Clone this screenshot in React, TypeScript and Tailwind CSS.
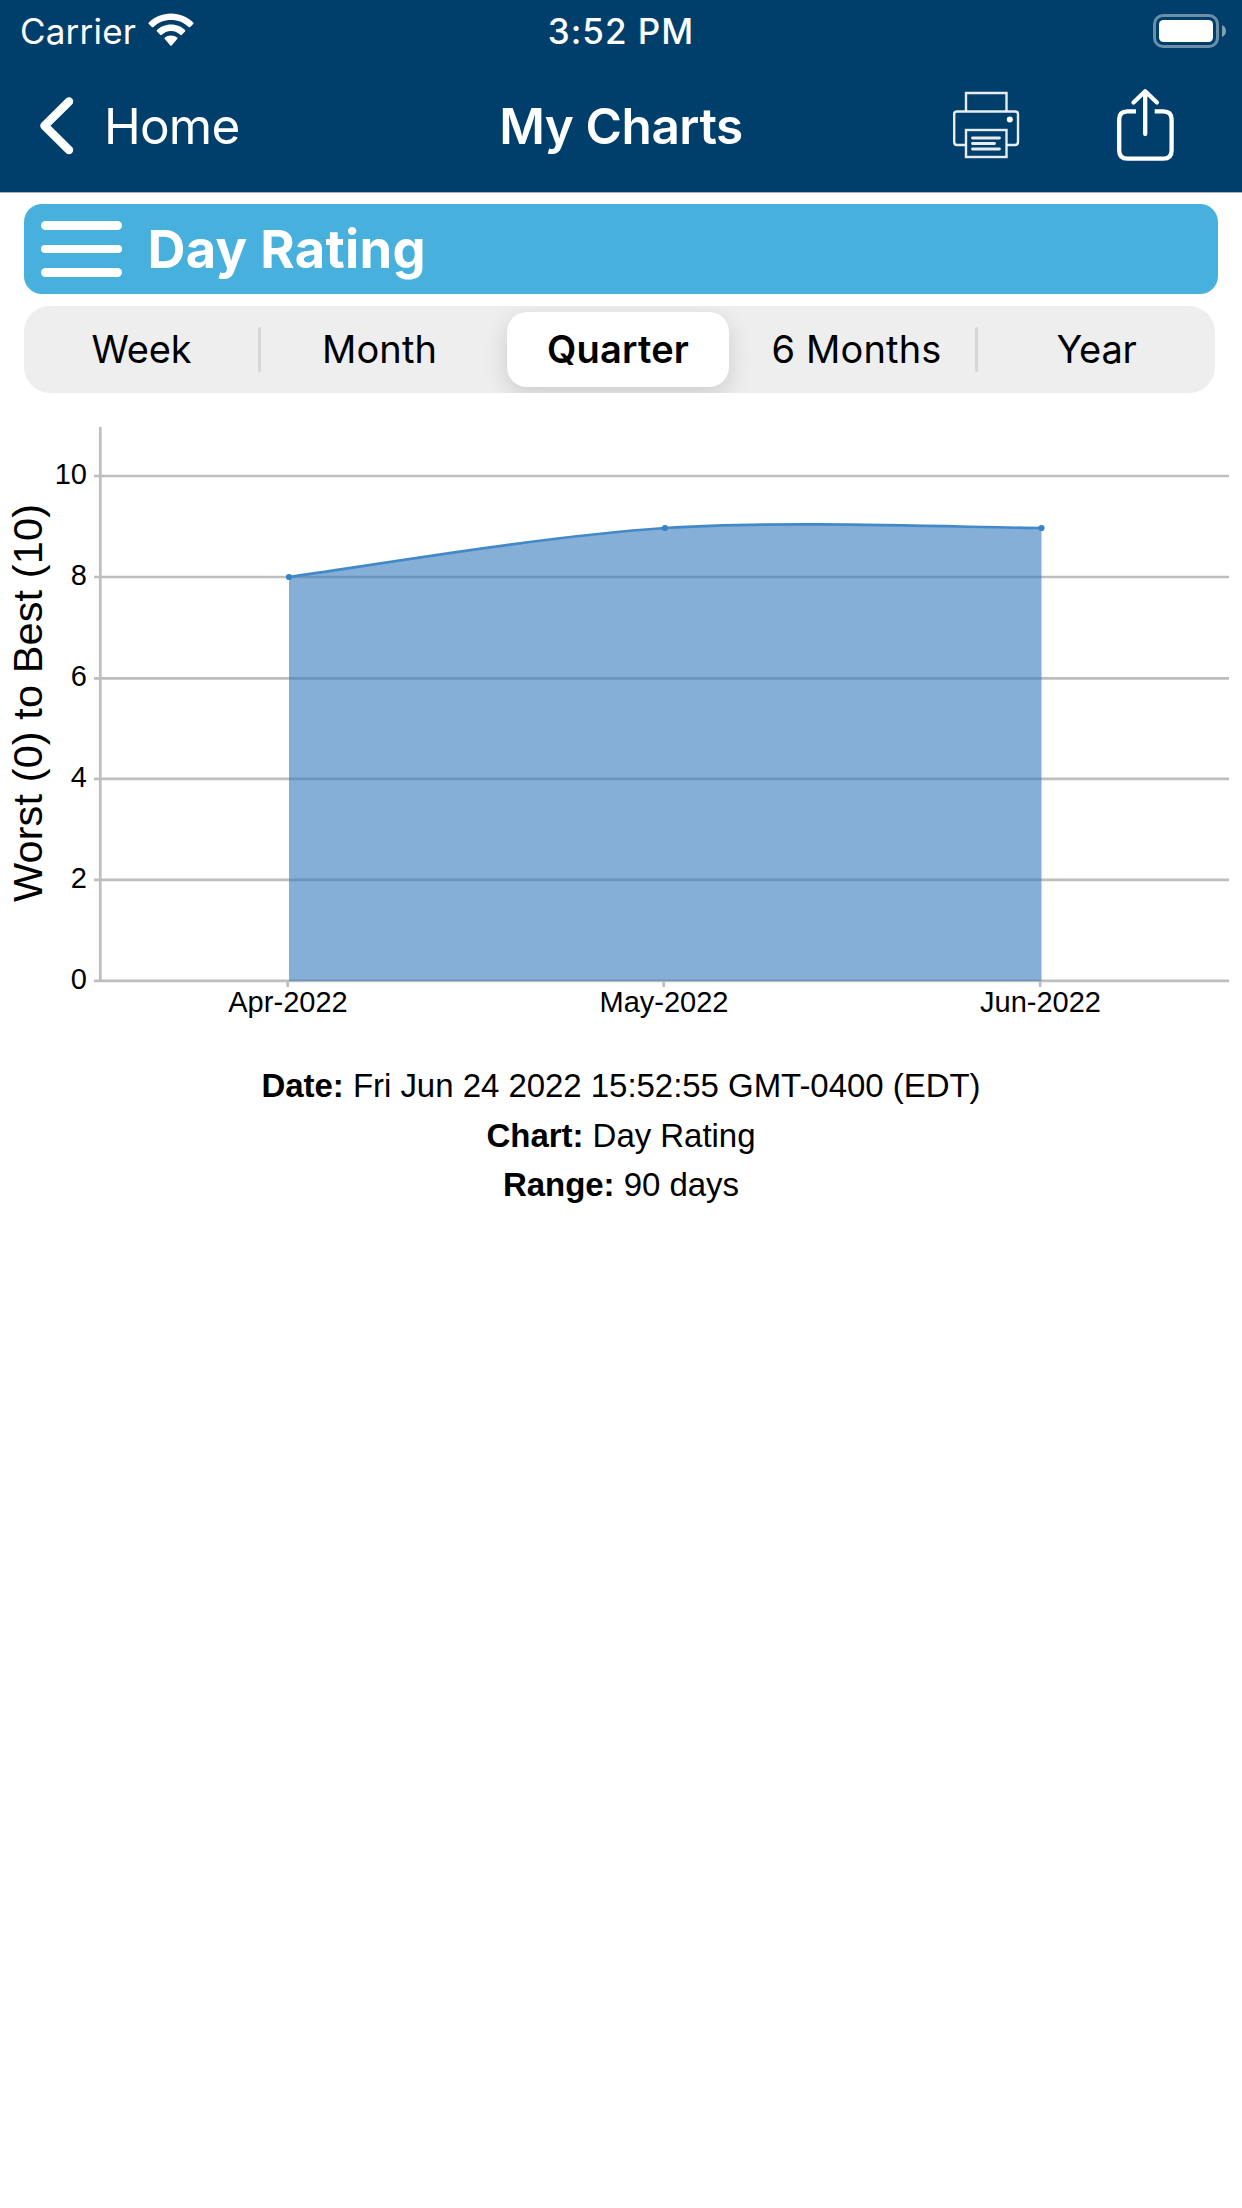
import { useState } from "react";

const RANGES = ["Week", "Month", "Quarter", "6 Months", "Year"];

const TRACKING: Record<string, string> = {
  Week: "tracking-[-0.2px]",
  Month: "tracking-[0.1px]",
  Quarter: "font-semibold tracking-[0.2px]",
  "6 Months": "tracking-[0.15px]",
  Year: "tracking-[-0.2px]",
};

const TICKS = [
  { value: 10, y: 476 },
  { value: 8, y: 577 },
  { value: 6, y: 678.3 },
  { value: 4, y: 778.8 },
  { value: 2, y: 879.8 },
  { value: 0, y: 980.8 },
];

const POINTS = [
  { label: "Apr-2022", x: 289, y: 577, width: 119.5 },
  { label: "May-2022", x: 665, y: 528, width: 129 },
  { label: "Jun-2022", x: 1041.5, y: 528, width: 121 },
];

const CURVE =
  "M289 577C351.7 568.8 539.7 536.2 665 528C790.3 519.8 978.8 528 1041.5 528";

function StatusBar() {
  return (
    <div className="grid h-[63px] grid-cols-[1fr_auto_1fr] items-center text-[35px] leading-none">
      <div className="flex items-center gap-[11px] pl-5">
        <span className="tracking-[0.2px]">Carrier</span>
        <svg className="-mt-1 h-[34px] w-[48px]" viewBox="0 0 48 34" fill="currentColor">
          <path d="M24 0.5C33 0.5 40.5 4 46.2 9.4Q47 10.2 46.2 11L43.2 14Q42.4 14.7 41.6 14C36.8 9.6 31 7 24 7S11.2 9.6 6.4 14Q5.6 14.7 4.8 14L1.8 11Q1 10.2 1.8 9.4C7.5 4 15 0.5 24 0.5Z" />
          <path d="M24 11.5C30 11.5 34.5 13.8 38 17Q38.8 17.8 38 18.6L34.8 21.8Q34 22.5 33.2 21.8C30.6 19.5 27.8 18.1 24 18.1S17.4 19.5 14.8 21.8Q14 22.5 13.2 21.8L10 18.6Q9.2 17.8 10 17C13.5 13.8 18 11.5 24 11.5Z" />
          <path d="M24 22.5C26.6 22.5 28.6 23.3 30.2 24.5Q31 25.2 30.2 26L24.7 32.5Q24 33.2 23.3 32.5L17.8 26Q17 25.2 17.8 24.5C19.4 23.3 21.4 22.5 24 22.5Z" />
        </svg>
      </div>
      <span className="font-medium tracking-[1px]">3:52 PM</span>
      <svg className="-mt-0.5 mr-4 h-[34px] w-[73px] justify-self-end" viewBox="0 0 73 34" fill="none">
        <rect x="1.5" y="1.5" width="63" height="31" rx="8.5" stroke="white" strokeOpacity="0.42" strokeWidth="3" />
        <rect x="6" y="6" width="54" height="22" rx="4.5" fill="white" />
        <path d="M69 11Q73 13 73 17T69 23Z" fill="white" fillOpacity="0.5" />
      </svg>
    </div>
  );
}

function PrinterIcon() {
  return (
    <svg className="h-[68px] w-[68px]" viewBox="952 91 68 68" fill="none" stroke="currentColor" strokeWidth="2.4" strokeOpacity="0.9">
      <path d="M966 111V93H1006.5V111" />
      <path d="M966 145H957Q954.2 145 954.2 142V114Q954.2 111.5 957 111.5H1015Q1018 111.5 1018 114V142Q1018 145 1015 145H1006.5" />
      <rect x="966" y="130" width="40.5" height="27" />
      <path d="M972.5 138H999.5M972.5 143.5H994.5M972.5 149H999.500" strokeWidth="2.800" strokeLinecap="round" />
      <circle cx="1009.8" cy="119.5" r="3" fill="currentColor" stroke="none" />
    </svg>
  );
}

function ShareIcon() {
  return (
    <svg className="h-[74px] w-[60px]" viewBox="1115 87 60 74" fill="none" stroke="currentColor" strokeWidth="4.3">
      <path d="M1136 110.3H1127.5Q1119.2 110.3 1119.2 118.5V149.5Q1119.2 157.7 1127.5 157.7H1163.3Q1171.6 157.7 1171.6 149.5V118.5Q1171.6 110.3 1163.3 110.3H1154.7" />
      <path d="M1145.2 91V133M1133.5 101.5L1145.2 90.3L1156.9 101.5" strokeLinecap="round" strokeLinejoin="round" />
    </svg>
  );
}

function NavBar() {
  return (
    <div className="grid h-[129px] grid-cols-[1fr_auto_1fr] items-center pb-px text-[49.5px] leading-none">
      <button className="flex items-center pl-[38px] text-left">
        <svg className="-mt-0.5 mr-[29px] h-[60px] w-[37px]" viewBox="38 96 37 60" fill="none">
          <path d="M69 101.5L44.5 125.8L69 150" stroke="white" strokeWidth="8.5" strokeLinecap="round" strokeLinejoin="round" />
        </svg>
        <span className="tracking-[-0.8px]">Home</span>
      </button>
      <h1 className="font-semibold tracking-[-0.45px]">My Charts</h1>
      <div className="flex items-center justify-end gap-[95px] pr-[67px] pb-1">
        <button><PrinterIcon /></button>
        <button><ShareIcon /></button>
      </div>
    </div>
  );
}

function RangePicker() {
  const [selected, setSelected] = useState("Quarter");

  return (
    <div className="mt-3 mr-[27px] ml-6 flex h-[87px] items-center overflow-hidden rounded-[26px] bg-[#eeeeee] text-[38px] leading-none">
      {RANGES.map((range, i) => (
        <div
          key={range}
          className={`flex h-full flex-none items-center ${i === 0 ? "w-[235px]" : "w-[239px]"}`}
        >
          {(i === 1 || i === 4) && (
            <span className="-ml-px h-[45px] w-[3px] flex-none rounded-full bg-[#d6d6d8]" />
          )}
          <button
            onClick={() => setSelected(range)}
            className={`h-[75px] flex-1 rounded-[20px] pb-[2px] whitespace-nowrap ${TRACKING[range]} ${
              selected === range
                ? "mr-[8px] ml-[9px] bg-white shadow-[0_8px_24px_rgba(0,0,0,0.14)]"
                : ""
            }`}
          >
            {range}
          </button>
        </div>
      ))}
    </div>
  );
}

function RatingChart() {
  return (
    <svg
      className="mt-[7px] block h-[620px] w-full font-['Liberation_Sans',Arial,sans-serif]"
      viewBox="0 400 1242 620"
      fill="black"
    >
      <g stroke="#bebebe" strokeWidth="2.7">
        {TICKS.map((tick) => (
          <path key={tick.value} d={`M94 ${tick.y}H1229`} />
        ))}
        <path d="M100.3 427V981" />
        {POINTS.map((point) => (
          <path key={point.label} d={`M${point.x - 1.3} 981V987`} />
        ))}
      </g>
      <path d={`${CURVE}V981H289Z`} fill="#347abc" fillOpacity="0.6" />
      <path d={CURVE} fill="none" stroke="#4289c7" strokeWidth="2.7" />
      {POINTS.map((point) => (
        <circle key={point.label} cx={point.x} cy={point.y} r="3.1" fill="#3a82c2" />
      ))}
      <g fontSize="29">
        {TICKS.map((tick) => (
          <text key={tick.value} x="87" y={tick.y + 8} textAnchor="end">
            {tick.value}
          </text>
        ))}
        {POINTS.map((point) => (
          <text key={point.label} x={point.x - 1} y="1012" textAnchor="middle" textLength={point.width}>
            {point.label}
          </text>
        ))}
      </g>
      <text transform="translate(42 902) rotate(-90)" fontSize="41.5" textLength="398">
        Worst (0) to Best (10)
      </text>
    </svg>
  );
}

export default function App() {
  return (
    <div className="min-h-[2208px] w-[1242px] bg-white font-['Inter',sans-serif] text-black">
      <header className="h-[193px] border-b border-[#b2b2b2] bg-[#003f6b] text-white">
        <StatusBar />
        <NavBar />
      </header>

      <button className="mt-[11px] ml-6 flex h-[90px] w-[1194px] items-center rounded-[18px] bg-[#47b0dc] pl-[16.5px] text-white">
        <span className="flex w-[81px] flex-col gap-[15px]">
          <span className="h-[8.5px] rounded-full bg-white" />
          <span className="h-[8.5px] rounded-full bg-white" />
          <span className="h-[8.5px] rounded-full bg-white" />
        </span>
        <span className="mt-px ml-[26px] text-[52.5px] leading-none font-bold tracking-[0.3px]">Day Rating</span>
      </button>

      <RangePicker />
      <RatingChart />

      <div className="mt-[41px] text-center font-['Liberation_Sans',Arial,sans-serif] text-[33px] leading-[49.5px] tracking-[-0.04px]">
        <p><b>Date:</b> Fri Jun 24 2022 15:52:55 GMT-0400 (EDT)</p>
        <p><b>Chart:</b> Day Rating</p>
        <p><b>Range:</b> 90 days</p>
      </div>
    </div>
  );
}
